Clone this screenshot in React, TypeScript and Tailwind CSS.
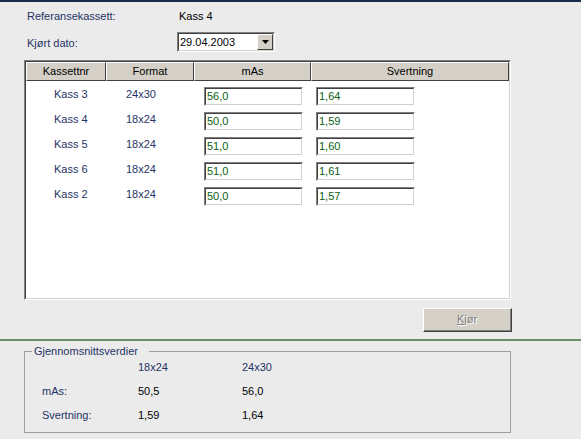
import React from "react";

interface Row {
  id: string;
  format: string;
  mas: string;
  svertning: string;
}

const ROWS: Row[] = [
  { id: "Kass 3", format: "24x30", mas: "56,0", svertning: "1,64" },
  { id: "Kass 4", format: "18x24", mas: "50,0", svertning: "1,59" },
  { id: "Kass 5", format: "18x24", mas: "51,0", svertning: "1,60" },
  { id: "Kass 6", format: "18x24", mas: "51,0", svertning: "1,61" },
  { id: "Kass 2", format: "18x24", mas: "50,0", svertning: "1,57" },
];

const HEADERS = [
  { label: "Kassettnr", w: "w-[80px]" },
  { label: "Format", w: "w-[88px]" },
  { label: "mAs", w: "w-[117px]" },
  { label: "Svertning", w: "w-[198px]" },
];

function Field({ value }: { value: string }) {
  return (
    <div className="w-[99px] h-[19px] bg-white border-t border-l border-t-[#808080] border-l-[#808080] border-b border-r border-b-white border-r-white">
      <div className="h-full border-t border-l border-t-[#404040] border-l-[#404040] border-b border-r border-b-[#d4d0c8] border-r-[#d4d0c8] pl-[1px] leading-[15px] text-[#0a6010]">
        {value}
      </div>
    </div>
  );
}

export default function App() {
  return (
    <div className="w-[581px] h-[439px] overflow-hidden bg-[#ebebeb] border-t-2 border-t-[#1b2a4a] font-['Liberation_Sans',Arial,sans-serif] text-[11px] text-[#1f3366]">
      {/* referanse */}
      <div className="flex items-center h-[14px] mt-[7px] ml-[27px]">
        <span className="w-[152px]">Referansekassett:</span>
        <span className="text-black">Kass 4</span>
      </div>

      {/* dato */}
      <div className="flex items-center h-[20px] mt-[9px] ml-[27px]">
        <span className="w-[150px] mt-[3px]">
          K<span className="underline">j</span>ørt dato:
        </span>
        <div className="flex w-[98px] h-[20px] bg-white border-t border-l border-t-[#808080] border-l-[#808080] border-b border-r border-b-white border-r-white">
          <div className="flex flex-1 border-t border-l border-t-[#404040] border-l-[#404040] border-b border-r border-b-[#d4d0c8] border-r-[#d4d0c8]">
            <span className="flex-1 pl-[1px] leading-[16px] text-black">29.04.2003</span>
            <div className="w-[16px] h-[16px] bg-[#d4d0c8] border-t border-l border-t-white border-l-white border-b border-r border-b-[#404040] border-r-[#404040] flex items-center justify-center">
              <svg width="7" height="4" viewBox="0 0 7 4">
                <path d="M0 0h7L3.5 4z" fill="#000" />
              </svg>
            </div>
          </div>
        </div>
      </div>

      {/* tabell */}
      <div className="mt-[8px] ml-[24px] w-[487px] h-[240px] border border-t-[#808080] border-l-[#808080] border-b-white border-r-white">
        <div className="h-full bg-white border border-t-[#404040] border-l-[#404040] border-b-[#d4d0c8] border-r-[#d4d0c8]">
          <div className="flex h-[19px]">
            {HEADERS.map((h) => (
              <div
                key={h.label}
                className={`${h.w} h-full bg-[#d4d0c8] border-t border-l border-t-white border-l-white border-b border-r border-b-[#404040] border-r-[#404040] flex items-center justify-center text-black`}
              >
                {h.label}
              </div>
            ))}
          </div>
          <div className="flex flex-col gap-[6px] pt-[6px]">
            {ROWS.map((r) => (
              <div key={r.id} className="flex h-[19px]">
                <div className="w-[80px] pl-[28px] leading-[14px]">{r.id}</div>
                <div className="w-[88px] pl-[20px] leading-[14px]">{r.format}</div>
                <div className="w-[117px] pl-[10px]">
                  <Field value={r.mas} />
                </div>
                <div className="w-[198px] pl-[5px]">
                  <Field value={r.svertning} />
                </div>
              </div>
            ))}
          </div>
        </div>
      </div>

      {/* knapp */}
      <div className="mt-[8px] ml-[423px] w-[89px] h-[24px] bg-[#d4d0c8] border-t border-l border-t-white border-l-white border-b border-r border-b-[#404040] border-r-[#404040]">
        <div className="h-full border-b border-r border-b-[#808080] border-r-[#808080] flex items-center justify-center text-[#808080] [text-shadow:1px_1px_0_#fff]">
          <span className="underline">K</span>jør
        </div>
      </div>

      <div className="mt-[7px] h-[2px] bg-[#6a8f6a]" />

      {/* gjennomsnitt */}
      <fieldset className="mt-[3px] ml-[24px] w-[487px] h-[89px] border border-[#a0a0a0]">
        <legend className="ml-[7px] pl-[2px] pr-[11px] leading-[14px]">Gjennomsnittsverdier</legend>
        <div className="grid grid-cols-[96px_104px_80px] gap-y-[10px] leading-[14px] mt-[2px] ml-[17px]">
          <span />
          <span>18x24</span>
          <span>24x30</span>
          <span>mAs:</span>
          <span className="text-black">50,5</span>
          <span className="text-black">56,0</span>
          <span>Svertning:</span>
          <span className="text-black">1,59</span>
          <span className="text-black">1,64</span>
        </div>
      </fieldset>
    </div>
  );
}
